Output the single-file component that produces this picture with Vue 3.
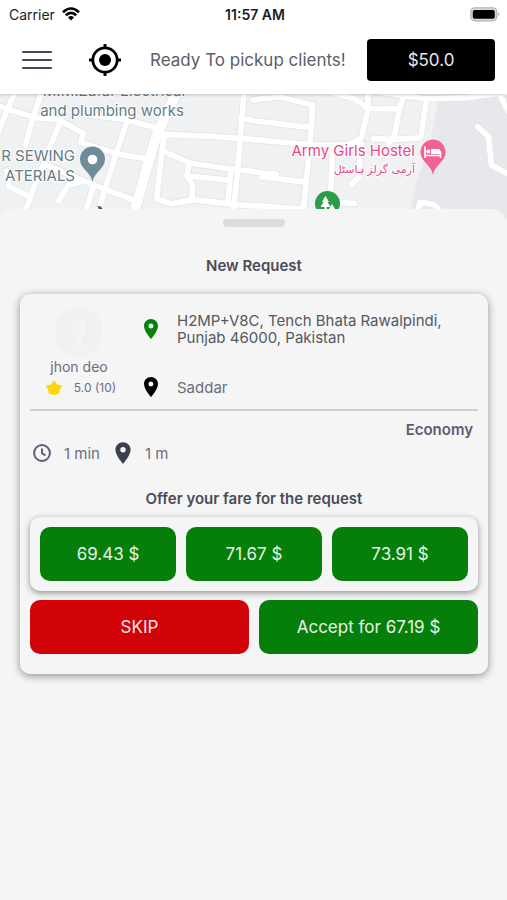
<script setup>
import { ref } from 'vue'

const balance = ref('$50.0')
const fares = ref(['69.43 $', '71.67 $', '73.91 $'])
const acceptFare = ref('67.19 $')

const pinPath = 'M12 2C8.1 2 5 5.1 5 9c0 5.2 7 13 7 13s7-7.8 7-13c0-3.900-3.100-7-7-7zm0 9.500a2.500 2.500 0 1 1 0-5 2.500 2.500 0 0 1 0 5z'

// Street lines, drawn on a grid three times finer than the map itself.
const roads = [
  'M45 20L22 75L-6 145',
  'M125 20L100 95L76 180',
  'M0 64L22 72L105 98L176 104L250 145L242 172L350 206L440 222',
  'M184 104L148 190M132 235L108 290L76 380',
  'M388 90L350 200L312 322L296 380',
  'M270 90L380 104L480 132',
  'M490 148L640 154L762 164',
  'M732 20L722 150L712 260L700 380',
  'M484 196L570 234L690 252L830 268',
  'M492 150L470 342L512 356L578 344L700 358L910 372',
  'M568 234L560 272L578 302L576 345',
  'M576 274L690 286',
  'M692 256L684 350',
  'M140 240L262 292L420 352',
  'M242 290L205 300L176 348',
  'M20 258L26 304L88 334',
  'M282 298L258 376',
  'M722 100L765 108L935 128',
  'M762 164L940 180L1085 178',
  'M759 45L840 36L938 60L932 150L910 380',
  'M784 276L908 290',
  'M990 20L1065 42L1104 70L1198 72L1216 20',
  'M1104 20L1104 70L1084 160L1040 184',
  'M1198 72L1184 150L1166 176',
  'M1130 20L1278 42L1400 38L1521 22',
  'M1280 40L1262 158L1176 164L1120 160',
  'M998 180L992 330',
  'M1082 190L1076 280L1056 296',
  'M980 350L1064 356',
  'M1434 126L1466 156L1474 240L1525 268',
  'M1254 380L1260 352L1300 358L1322 380',
  'M1525 80L1500 30',
]
const mainRoad = 'M536 10L470 150L440 250L402 385'
</script>

<template>
  <div class="screen">
    <div class="status">
      <div class="carrier">
        <span>Carrier</span>
        <svg class="wifi" viewBox="0 0 18 14" aria-hidden="true">
          <path d="M1 5.200Q9-2.200 17 5.200" />
          <path d="M3.800 8.200Q9 3.400 14.200 8.200" />
          <path class="dot" d="M9 13.500L6 10.400Q9 7.800 12 10.400Z" />
        </svg>
      </div>
      <strong class="time">11:57 AM</strong>
      <svg class="battery" viewBox="0 0 31 15" aria-hidden="true">
        <rect x="0.800" y="0.800" width="26" height="13" rx="4" fill="#dcdcdc" stroke="#b4b4b4" stroke-width="1.200" />
        <rect x="2.800" y="2.900" width="22" height="8.800" rx="1.800" fill="#000" />
        <path d="M28.300 5Q30.500 7.300 28.300 9.600Z" fill="#a9a9a9" />
      </svg>
    </div>

    <header class="header">
      <button class="icon-button menu" type="button" aria-label="Menu">
        <svg viewBox="0 0 30 20"><path d="M1 2H29M1 10H29M1 18H29" /></svg>
      </button>
      <button class="icon-button locate" type="button" aria-label="My location">
        <svg viewBox="0 0 34 34">
          <circle cx="17" cy="17" r="12.200" fill="none" stroke="#000" stroke-width="2.800" />
          <circle cx="17" cy="17" r="6" />
          <path d="M17 1V6M17 28V33M1 17H6M28 17H33" stroke="#000" stroke-width="3" />
        </svg>
      </button>
      <p class="headline">Ready To pickup clients!</p>
      <button class="balance" type="button">{{ balance }}</button>
    </header>

    <div class="map">
      <svg viewBox="0 94 507 125" preserveAspectRatio="xMidYMin slice">
        <g transform="translate(0 85) scale(0.333333)" fill="none" stroke-linecap="round" stroke-linejoin="round">
          <path d="M1314 50L1530 28V400H1226L1250 290L1290 180Z" fill="#e6e8eb" />
          <g stroke="#e0e2e5" stroke-width="21">
            <path v-for="(road, i) in roads" :key="i" :d="road" />
            <path :d="mainRoad" stroke-width="34" />
          </g>
          <g stroke="#fff" stroke-width="17">
            <path v-for="(road, i) in roads" :key="i" :d="road" />
            <path :d="mainRoad" stroke-width="30" />
          </g>
        </g>

        <g class="place slate" text-anchor="middle">
          <text x="114" y="96">M.M.Zafar Electrical</text>
          <text x="112" y="116">and plumbing works</text>
        </g>
        <g class="place slate" text-anchor="end">
          <text x="75" y="161">R SEWING</text>
          <text x="75" y="181">ATERIALS</text>
        </g>
        <g class="place pink" text-anchor="end">
          <text x="415" y="156">Army Girls Hostel</text>
          <text class="urdu" x="415" y="173" text-anchor="start" direction="rtl">آرمی گرلز ہاسٹل</text>
        </g>

        <path d="M92.500 182C91 172 80 169 80 159A12.500 12.500 0 0 1 105 159C105 169 94 172 92.500 182Z" fill="#6f8d98" />
        <circle cx="92.500" cy="159.500" r="4.800" fill="#fff" />

        <path d="M433 175C431.500 165 420.500 162 420.500 152A12.500 12.500 0 0 1 445.500 152C445.500 162 434.500 165 433 175Z" fill="#f06292" />
        <path d="M425 146.500V158M425 155.500H440.500M440.500 158V151.500" fill="none" stroke="#fff" stroke-width="1.600" />
        <path d="M431 149H438Q440.500 149 440.500 151.500V154H431Z" fill="#fff" />
        <circle cx="428.300" cy="151.500" r="2" fill="#fff" />

        <circle cx="327.500" cy="203.500" r="12.500" fill="#2c9c46" />
        <path d="M325.500 196L329 202H327.500L330.500 207H326.500V211H324.500V207H320.500L323.500 202H322Z" fill="#fff" />
        <path d="M332 204L335 209H329Z" fill="#fff" />
        <path d="M97.500 206L101 206.500L103 210H99Z" fill="#555" />
      </svg>
    </div>

    <main class="sheet">
      <div class="handle"></div>
      <h1 class="title">New Request</h1>

      <section class="card">
        <div class="trip">
          <div class="rider">
            <svg class="avatar" viewBox="0 0 48 48" aria-hidden="true">
              <circle cx="24" cy="24" r="24" fill="#f1f1f1" />
              <path d="M10 43Q12 37 20 35V31Q15 27 15 19Q15 8 24 8Q33 8 33 19Q33 27 28 31V35Q36 37 38 43" fill="#f3f3f3" stroke="#eeeeee" />
            </svg>
            <span class="name">jhon deo</span>
            <div class="rating">
              <svg viewBox="0 0 16 16" aria-hidden="true">
                <path d="M8 1.500L10.500 5.200L15 6L13.300 9.500L12.300 13L8 14.300L3.700 13L2.700 9.500L1 6L5.500 5.200Z" fill="#ffd60a" stroke="#ffd60a" stroke-width="1.500" stroke-linejoin="round" />
              </svg>
              <span>5.0 (10)</span>
            </div>
          </div>
          <div class="stops">
            <div class="stop pickup">
              <svg class="pin" viewBox="0 0 24 24" aria-hidden="true"><path :d="pinPath" fill="#058209" /></svg>
              <span>H2MP+V8C, Tench Bhata Rawalpindi, Punjab 46000, Pakistan</span>
            </div>
            <div class="stop dropoff">
              <svg class="pin" viewBox="0 0 24 24" aria-hidden="true"><path :d="pinPath" fill="#000" /></svg>
              <span>Saddar</span>
            </div>
          </div>
        </div>

        <p class="service">Economy</p>

        <div class="metrics">
          <svg class="clock" viewBox="0 0 18 18" aria-hidden="true">
            <circle cx="9" cy="9" r="7.900" /><path d="M9 4.500V9.300L12.500 11.500" />
          </svg>
          <span class="minutes">1 min</span>
          <svg class="pin large" viewBox="0 0 24 24" aria-hidden="true"><path :d="pinPath" fill="#3b3f51" /></svg>
          <span>1 m</span>
        </div>

        <h2 class="offer">Offer your fare for the request</h2>
        <div class="fares">
          <button v-for="fare in fares" :key="fare" class="action" type="button">{{ fare }}</button>
        </div>
        <div class="answers">
          <button class="action skip" type="button">SKIP</button>
          <button class="action" type="button">Accept for {{ acceptFare }}</button>
        </div>
      </section>
    </main>
  </div>
</template>

<style>
body {
  background: #f5f5f5;
}
</style>

<style scoped>
.screen {
  display: flex;
  flex-direction: column;
  min-height: 100vh;
  background: #f5f5f5;
  font-family: Inter, "Liberation Sans", sans-serif;
  color: #6b6e80;
}
button {
  margin: 0;
  padding: 0;
  border: 0;
  font: inherit;
  cursor: pointer;
}
h1, h2, p {
  margin: 0;
}
svg {
  display: block;
  flex: none;
}
.status {
  position: relative;
  z-index: 1;
  display: grid;
  grid-template-columns: 1fr auto 1fr;
  align-items: center;
  height: 28px;
  padding: 0 6px 0 9px;
  box-sizing: border-box;
  background: #fff;
  color: #1c1c1c;
  font-size: 14px;
}
.carrier {
  display: flex;
  align-items: center;
  gap: 7px;
}
.wifi {
  width: 18px;
  height: 14px;
  fill: none;
  stroke: #000;
  stroke-width: 2.6;
}
.wifi .dot {
  fill: #000;
  stroke: none;
}
.time {
  font-size: 14px;
  font-weight: 600;
}
.battery {
  width: 31px;
  height: 15px;
  justify-self: end;
}
.header {
  position: relative;
  display: flex;
  align-items: center;
  height: 66px;
  padding: 0 12px 2px 22px;
  box-sizing: border-box;
  background: #fff;
  box-shadow: 0 1px 3px rgba(0, 0, 0, 0.2);
}
.icon-button {
  flex: none;
  background: none;
}
.menu svg {
  width: 30px;
  height: 20px;
  fill: none;
  stroke: #44465a;
  stroke-width: 2;
  stroke-linecap: round;
}
.locate {
  margin: 0 28px 0 36px;
}
.locate svg {
  width: 34px;
  height: 34px;
}
.headline {
  flex: 1;
  font-size: 17px;
  white-space: nowrap;
  color: #5b5d6b;
}
.balance {
  width: 128px;
  height: 42px;
  border-radius: 4px;
  background: #000;
  color: #e8e8e8;
  font-size: 17px;
}
.map {
  height: 125px;
  background: #eff1f3;
}
.map svg {
  width: 100%;
  height: 125px;
}
.place {
  font-size: 15px;
  paint-order: stroke;
  stroke: #fff;
  stroke-width: 2px;
  stroke-linejoin: round;
}
.slate {
  fill: #617b85;
}
.pink {
  fill: #e8488a;
}
.urdu {
  font-family: "DejaVu Sans", sans-serif;
  font-size: 11px;
}
.sheet {
  position: relative;
  flex: 1;
  display: flex;
  flex-direction: column;
  margin-top: -10px;
  padding: 10px 19px 40px 20px;
  border-radius: 16px 16px 0 0;
  background: #f5f5f5;
}
.handle {
  align-self: center;
  width: 62px;
  height: 8px;
  border-radius: 4px;
  background: #dcdcdc;
}
.title {
  margin: 29px 0 18px;
  font-size: 15px;
  font-weight: 600;
  line-height: 20px;
  text-align: center;
  color: #4a4b57;
}
.card {
  padding: 10px 10px 20px;
  border-radius: 10px;
  background: #f5f5f5;
  box-shadow: 0 2px 8px rgba(0, 0, 0, 0.42);
}
.trip {
  display: flex;
  height: 105px;
  border-bottom: 2px solid #cfcfcf;
}
.rider {
  flex: none;
  width: 98px;
  display: flex;
  flex-direction: column;
  align-items: center;
  padding-top: 4px;
}
.avatar {
  width: 48px;
  height: 48px;
}
.name {
  padding-top: 1px;
  font-size: 14px;
  line-height: 20px;
}
.rating {
  display: flex;
  align-items: center;
  gap: 12px;
  margin-left: 4px;
  font-size: 12px;
  line-height: 22px;
}
.rating svg {
  width: 16px;
  height: 16px;
}
.stops {
  flex: 1;
  min-width: 0;
  display: flex;
  flex-direction: column;
  justify-content: space-between;
  padding: 8px 20px 12px 11px;
}
.stop {
  display: flex;
  align-items: center;
  gap: 14px;
  font-size: 15px;
  line-height: 17px;
}
.pickup {
  color: #56575f;
}
.pin {
  width: 24px;
  height: 24px;
}
.dropoff {
  height: 20px;
}
.service {
  padding: 9px 5px 0 0;
  font-size: 15px;
  font-weight: 600;
  line-height: 20px;
  text-align: right;
  color: #5b5d76;
}
.metrics {
  display: flex;
  align-items: center;
  height: 26px;
  padding-left: 3px;
  font-size: 15px;
}
.clock {
  width: 18px;
  height: 18px;
  margin-right: 13px;
  fill: none;
  stroke: #5b5f78;
  stroke-width: 2;
}
.minutes {
  margin-right: 10px;
}
.large {
  width: 26px;
  height: 26px;
  margin-right: 9px;
}
.offer {
  margin: 23px 0 8px;
  font-size: 15px;
  font-weight: 600;
  line-height: 20px;
  text-align: center;
  color: #4a4b57;
}
.fares {
  display: flex;
  gap: 10px;
  padding: 10px;
  border-radius: 10px;
  box-shadow: 0 2px 6px rgba(0, 0, 0, 0.42);
}
.answers {
  display: flex;
  gap: 10px;
  margin-top: 9px;
}
.action {
  flex: 1;
  height: 54px;
  border-radius: 10px;
  background: #067f0a;
  color: #e6f4e6;
  font-size: 17px;
}
.skip {
  background: #d20209;
  color: #fbe4e4;
}
</style>
